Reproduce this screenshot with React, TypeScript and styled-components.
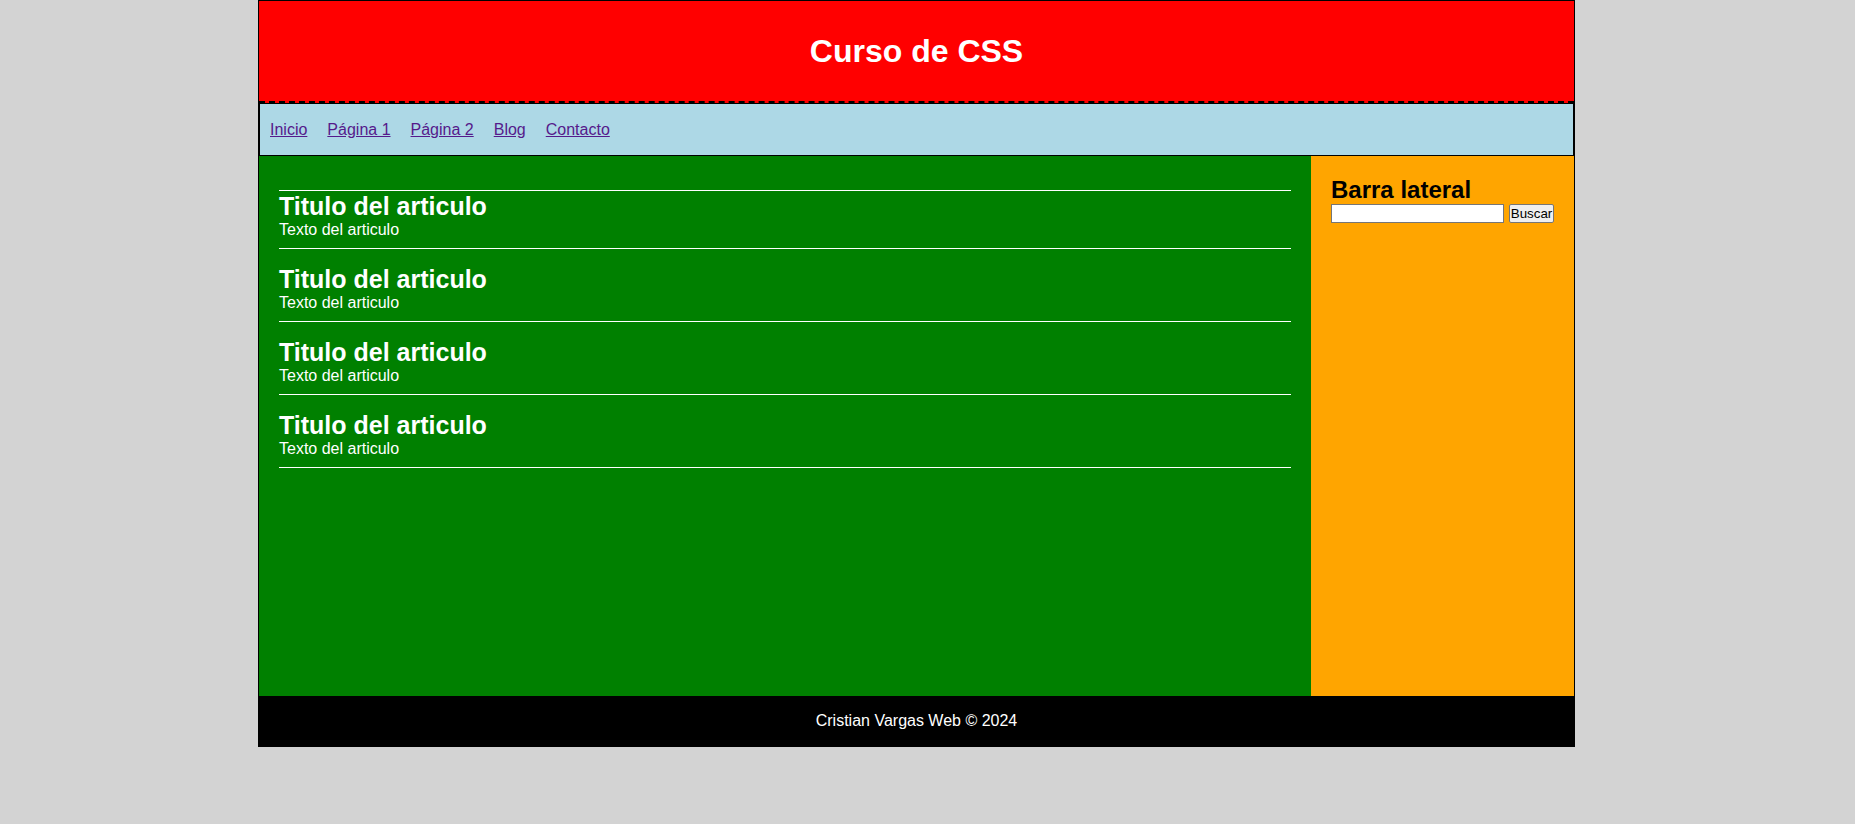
import React from "react";
import styled, { createGlobalStyle } from "styled-components";

const GlobalStyle = createGlobalStyle`
    body {
        margin: 0;
        background: #d3d3d3;
        font-family: "Liberation Sans", Arial, sans-serif;
    }
`;

const Page = styled.div`
    box-sizing: border-box;
    width: 1317px;
    margin-left: 258px;
    border: 1px solid #000;
`;

const Header = styled.header`
    padding: 10px;
    background: #ff0000;
    border-bottom: 2px dashed #000;
    text-align: center;
    color: #fff;
`;

const SiteTitle = styled.h1`
    margin: 22px 0 21px;
    font-size: 32px;
    line-height: 37px;
    font-weight: 700;
`;

const Nav = styled.nav`
    background: #add8e6;
    border: 1px solid #000;
`;

const NavList = styled.ul`
    display: flex;
    margin: 17px 0 16px;
    padding: 0;
    list-style: none;
    line-height: 18px;
`;

const NavLink = styled.a`
    margin: 0 10px;
    font-size: 16px;
    color: #551a8b;
    text-decoration: underline;
`;

const Content = styled.div`
    display: flex;
    height: 540px;
`;

const Main = styled.main`
    box-sizing: border-box;
    flex: 0 0 80%;
    padding: 20px;
    background: #008000;
    color: #fff;
`;

const ArticleList = styled.section`
    margin-top: 14px;
    border-top: 1px solid #fff;
`;

const Article = styled.article`
    padding-bottom: 9px;
    border-bottom: 1px solid #fff;
`;

const ArticleTitle = styled.h2<{ $first?: boolean }>`
    margin: ${({ $first }) => ($first ? "2px" : "17px")} 0 0;
    font-size: 25px;
    line-height: 27px;
`;

const ArticleText = styled.p`
    margin: 1px 0 0;
    font-size: 16px;
    line-height: 18px;
`;

const Sidebar = styled.aside`
    box-sizing: border-box;
    flex: 1;
    padding: 20px;
    background: #ffa500;
    color: #000;
`;

const SideTitle = styled.h2`
    margin: 0;
    font-size: 24px;
    line-height: 27px;
`;

const SearchForm = styled.form`
    display: flex;
    gap: 5px;
    margin-top: 1px;
`;

const SearchInput = styled.input`
    box-sizing: border-box;
    width: 173px;
    height: 19px;
    padding: 1px 2px;
    border: 1px solid #767676;
    background: #fff;
    font-family: inherit;
    font-size: 13.33px;
`;

const SearchButton = styled.button`
    box-sizing: border-box;
    width: 45px;
    height: 19px;
    padding: 0;
    border: 1px solid #767676;
    border-radius: 2px;
    background: #efefef;
    color: #000;
    font-family: inherit;
    font-size: 13.33px;
`;

const Footer = styled.footer`
    padding: 16px 0;
    background: #000;
    color: #fff;
    text-align: center;
`;

const FooterText = styled.p`
    margin: 0;
    font-size: 16px;
    line-height: 18px;
`;

const links = ["Inicio", "Página 1", "Página 2", "Blog", "Contacto"];
const articles = [1, 2, 3, 4];

const App = () => {
    return (
        <>
            <GlobalStyle />
            <Page>
                <Header>
                    <SiteTitle>Curso de CSS</SiteTitle>
                </Header>
                <Nav>
                    <NavList>
                        {links.map((link) => (
                            <li key={link}>
                                <NavLink href="#">{link}</NavLink>
                            </li>
                        ))}
                    </NavList>
                </Nav>
                <Content>
                    <Main>
                        <ArticleList>
                            {articles.map((n, idx) => (
                                <Article key={n}>
                                    <ArticleTitle $first={idx === 0}>Titulo del articulo</ArticleTitle>
                                    <ArticleText>Texto del articulo</ArticleText>
                                </Article>
                            ))}
                        </ArticleList>
                    </Main>
                    <Sidebar>
                        <SideTitle>Barra lateral</SideTitle>
                        <SearchForm onSubmit={(e) => e.preventDefault()}>
                            <SearchInput type="text" />
                            <SearchButton type="submit">Buscar</SearchButton>
                        </SearchForm>
                    </Sidebar>
                </Content>
                <Footer>
                    <FooterText>Cristian Vargas Web © 2024</FooterText>
                </Footer>
            </Page>
        </>
    );
};

export default App;
